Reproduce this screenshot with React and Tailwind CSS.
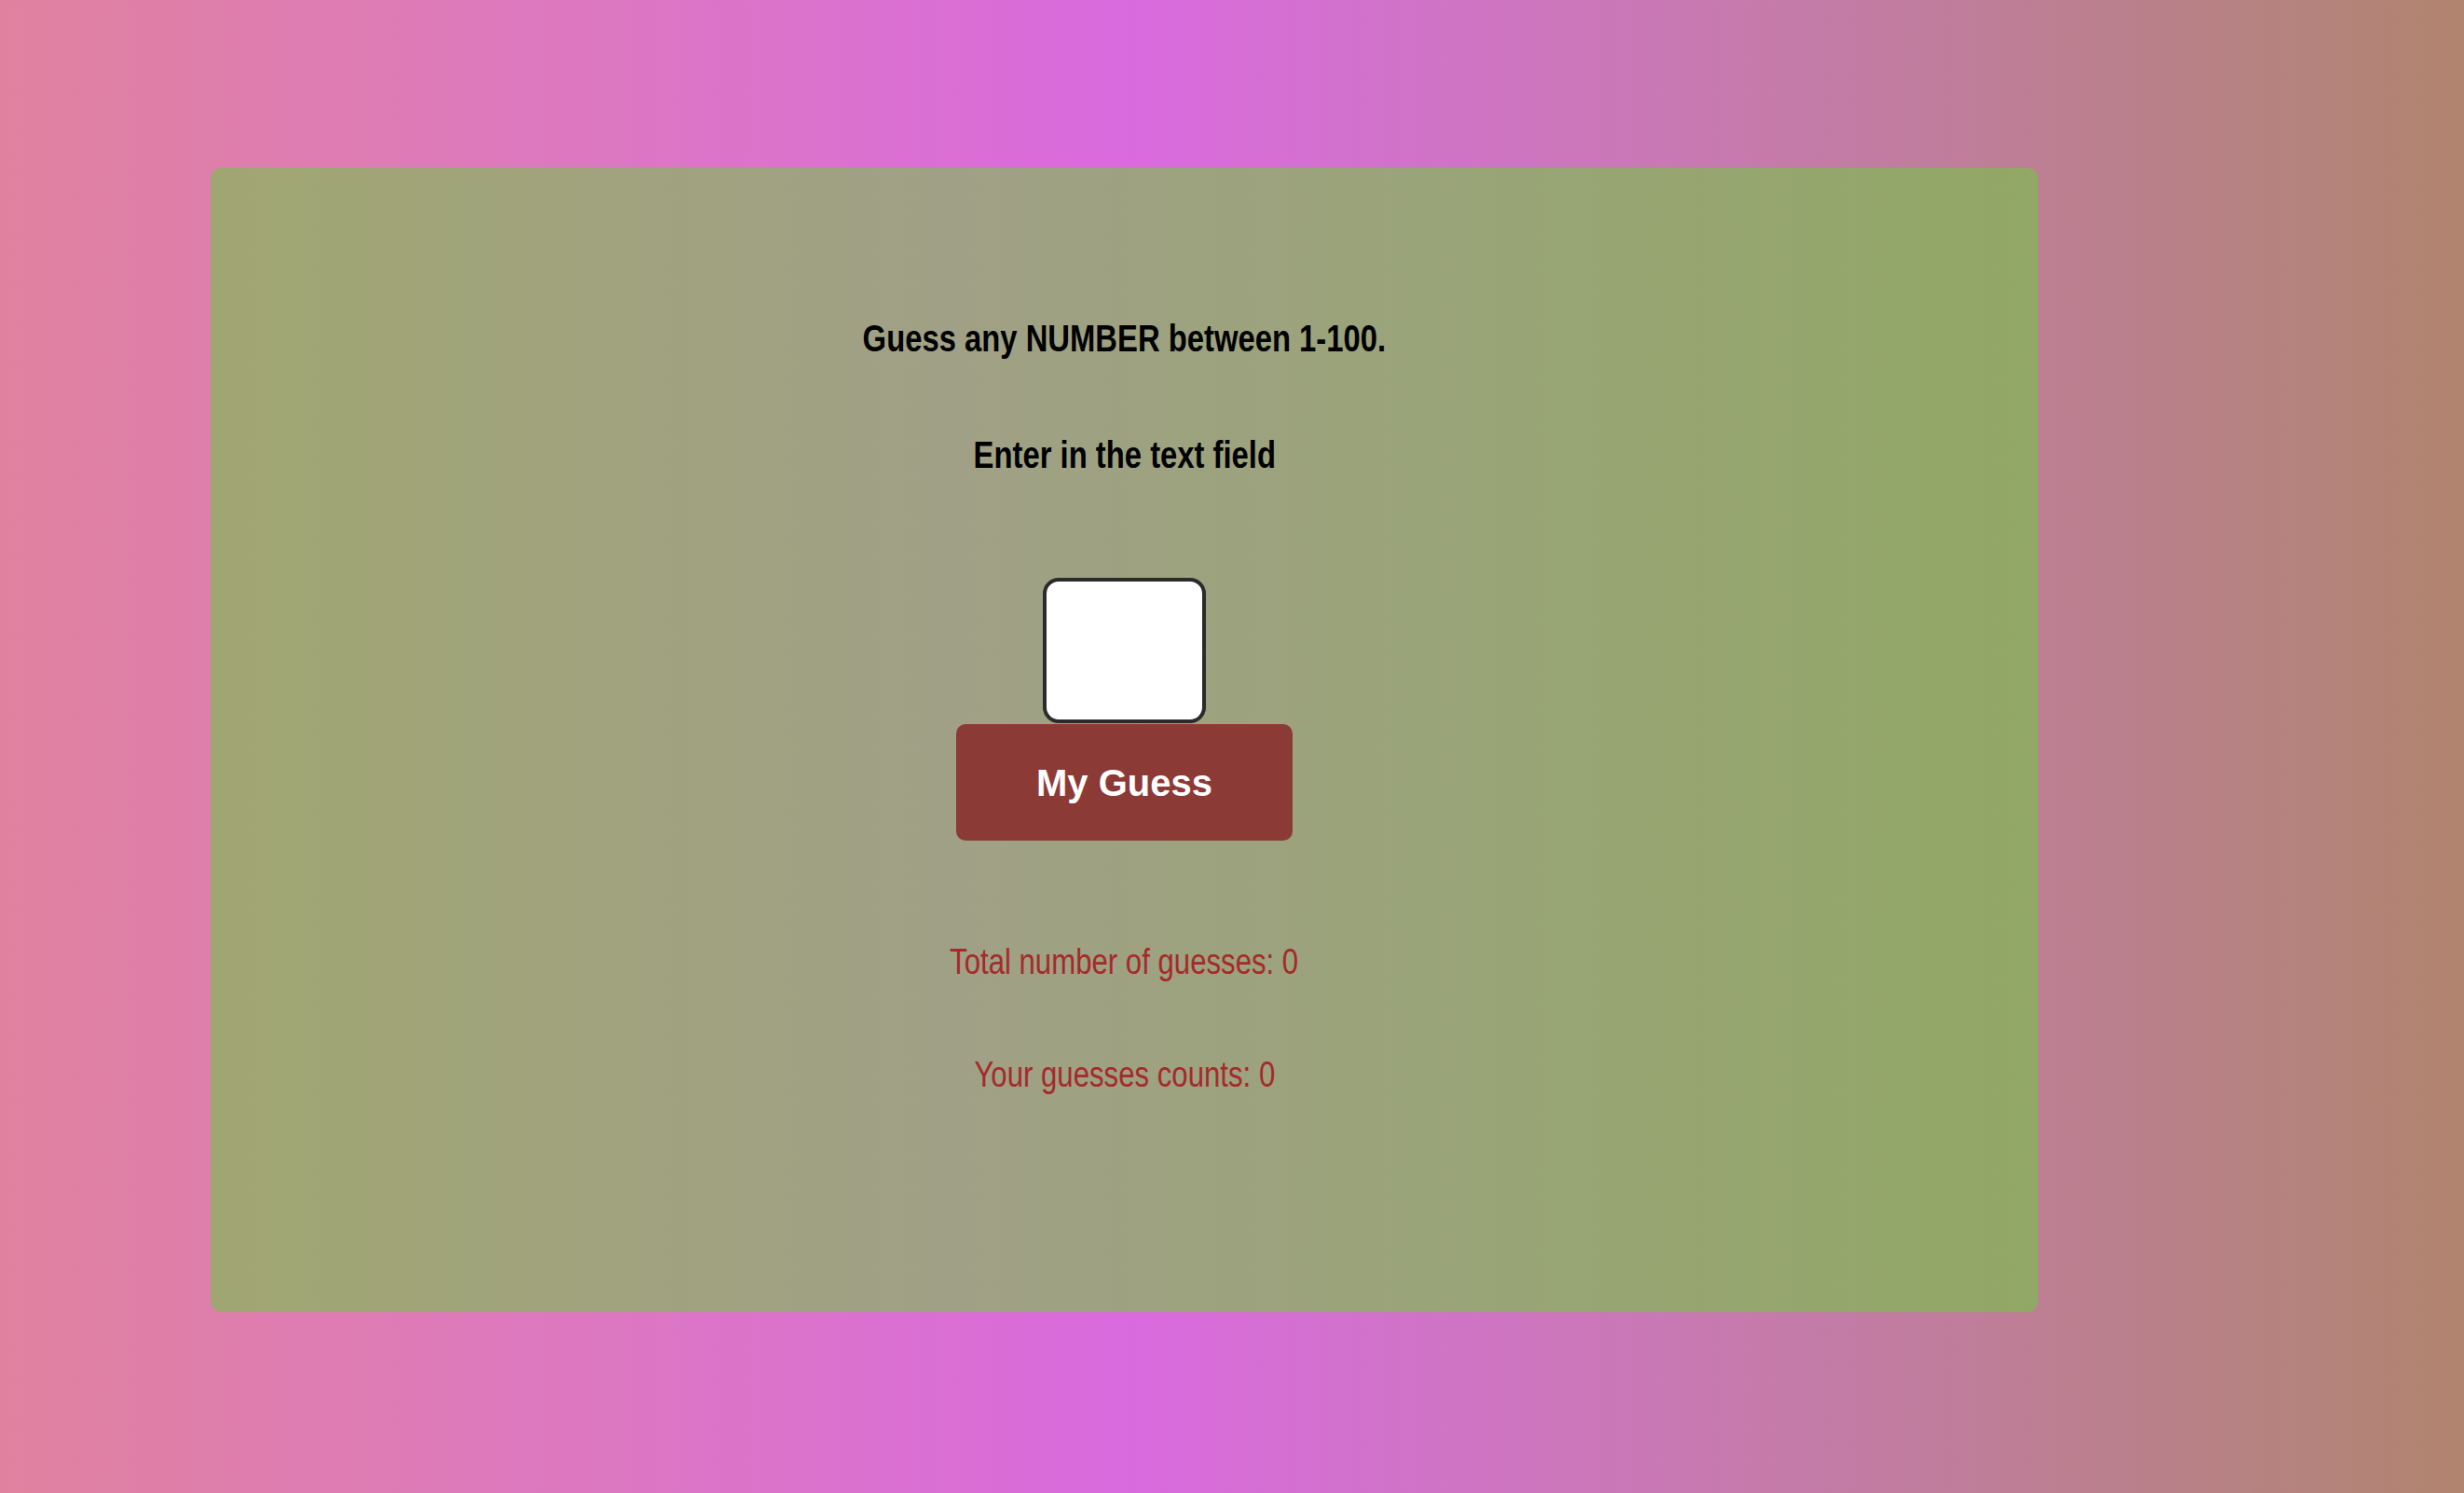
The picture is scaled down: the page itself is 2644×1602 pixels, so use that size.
import React from "react";

const narrow = "font-['Liberation_Sans_Narrow','Arial_Narrow','Liberation_Sans',Arial,sans-serif] scale-x-[0.82] origin-center";

export default function App() {
  return (
    <div className="w-[2644px] h-[1602px] bg-gradient-to-r from-[#e0829f] via-[#d96ade] via-[46%] to-[#b0846e] pt-[180px] pl-[226px]">
      <div className="w-[1961px] h-[1228px] rounded-[12px] bg-gradient-to-r from-[#a0a672] via-[#a0a086] via-40% to-[#92a866] flex flex-col items-center pt-[160px]">
        <h1 className={`${narrow} font-bold text-[40px] leading-[46px] text-black whitespace-nowrap`}>
          Guess any NUMBER between 1-100.
        </h1>
        <h2 className={`${narrow} mt-[79px] font-bold text-[40px] leading-[46px] text-black whitespace-nowrap`}>
          Enter in the text field
        </h2>
        <input
          type="text"
          className="mt-[109px] w-[175px] h-[156px] bg-white border-[4px] border-[#2b2b2b] rounded-[17px] outline-none"
        />
        <button className="mt-[1px] w-[361px] h-[125px] rounded-[10px] bg-[#8c3a36] text-white font-['Liberation_Sans',Arial,sans-serif] font-bold text-[40px]">
          My Guess
        </button>
        <p className={`${narrow} mt-[107px] text-[38px] leading-[46px] text-[#a52a2a] whitespace-nowrap`}>
          Total number of guesses: 0
        </p>
        <p className={`${narrow} mt-[75px] text-[38px] leading-[46px] text-[#a52a2a] whitespace-nowrap`}>
          Your guesses counts: 0
        </p>
      </div>
    </div>
  );
}
